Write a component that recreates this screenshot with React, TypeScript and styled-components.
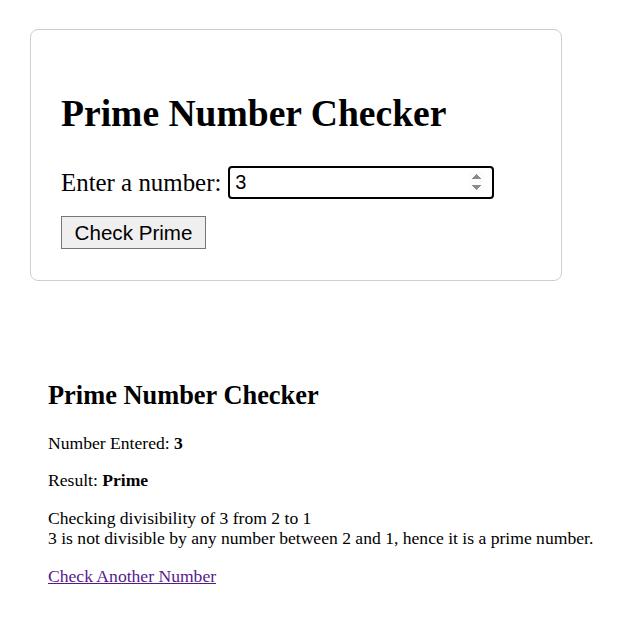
import React from "react";
import styled, { createGlobalStyle } from "styled-components";

const Global = createGlobalStyle`
  html, body { margin: 0; padding: 0; background: #fff; }
  body { font-family: "Liberation Serif", "Times New Roman", serif; color: #000; }
`;

const Page = styled.div`
  display: flex;
  flex-direction: column;
  padding: 29px 0 0 30px;
`;

const Card = styled.div`
  box-sizing: border-box;
  width: 532px;
  border: 1px solid #cfcfcf;
  border-radius: 8px;
  padding: 30px 31px 31px 30px;
`;

const Title = styled.h1`
  font-size: 37.6px;
  font-weight: bold;
  margin: 32px 0 31px;
  line-height: normal;
`;

const Row = styled.div`
  display: flex;
  align-items: center;
  gap: 7px;
  font-size: 24.9px;
`;

const NumberInput = styled.input`
  width: 266px;
  height: 33px;
  box-sizing: border-box;
  border: 2px solid #000;
  border-radius: 4px;
  font-family: "Liberation Sans", Arial, sans-serif;
  font-size: 20px;
  padding: 0 8px 0 5px;
  outline: none;
  color: #000;
  &::-webkit-inner-spin-button {
    opacity: 1;
  }
`;

const Button = styled.button`
  margin-top: 17px;
  align-self: flex-start;
  width: 145px;
  height: 33px;
  font-family: "Liberation Sans", Arial, sans-serif;
  font-size: 20.6px;
  background: #efefef;
  border: 1px solid #767676;
  border-radius: 0;
  color: #000;
  padding: 0;
`;

const Form = styled.div`
  display: flex;
  flex-direction: column;
`;

const Result = styled.div`
  padding: 0 0 0 18px;
  margin-top: 77px;
  font-size: 17.6px;
`;

const Heading = styled.h2`
  font-size: 26.4px;
  line-height: normal;
  margin: 21.9px 0;
`;

const Para = styled.p`
  margin: 17.6px 0;
  line-height: 20px;
`;

const Link = styled.a`
  color: #551a8b;
`;

export default function App() {
  return (
    <>
      <Global />
      <Page>
        <Card>
          <Title>Prime Number Checker</Title>
          <Form>
            <Row>
              <label>Enter a number:</label>
              <NumberInput type="number" defaultValue={3} />
            </Row>
            <Button>Check Prime</Button>
          </Form>
        </Card>
        <Result>
          <Heading>Prime Number Checker</Heading>
          <Para>Number Entered: <b>3</b></Para>
          <Para>Result: <b>Prime</b></Para>
          <Para>
            Checking divisibility of 3 from 2 to 1<br />
            3 is not divisible by any number between 2 and 1, hence it is a prime number.
          </Para>
          <Link href="#">Check Another Number</Link>
        </Result>
      </Page>
    </>
  );
}
